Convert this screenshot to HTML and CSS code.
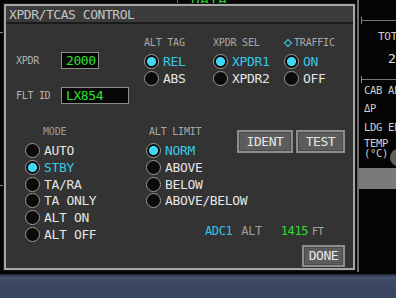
FILE: index.html
```html
<!DOCTYPE html>
<html lang="en">
<head>
    <meta charset="UTF-8">
    <title>XPDR/TCAS Control</title>
    <link rel="stylesheet" href="styles.css">
</head>
<body>
    <div class="screen">
        <div class="display">
            <!-- background display fragments -->
            <div class="top-rule"></div>
            <div class="top-title">DATA</div>
            <div class="edge-tick edge-tick--upper"></div>
            <div class="edge-tick edge-tick--lower"></div>

            <div class="side">
                <div class="side__rule side__rule--first"></div>
                <div class="side__tot">TOT</div>
                <div class="side__num">2</div>
                <div class="side__rule side__rule--second"></div>
                <div class="side__text side__text--cab">CAB ALT</div>
                <div class="side__text side__text--dp">ΔP</div>
                <div class="side__text side__text--ldg">LDG ELEV</div>
                <div class="side__text side__text--temp">TEMP<br>(°C)</div>
                <div class="side__bar"></div>
                <div class="side__knob"></div>
            </div>

            <!-- dialog -->
            <div class="dialog">
                <div class="dialog__title">XPDR/TCAS CONTROL</div>
                <div class="dialog__body">
                    <div class="top-row">
                        <div class="fields">
                            <div class="field">
                                <span class="field__label">XPDR</span>
                                <span class="field__box field__box--short">2000</span>
                            </div>
                            <div class="field">
                                <span class="field__label">FLT ID</span>
                                <span class="field__box field__box--long">LX854</span>
                            </div>
                        </div>
                        <div class="group group--tag">
                            <div class="group__title">ALT TAG</div>
                            <ul class="radios">
                                <li class="radio radio--on"><span class="radio__dot"></span>REL</li>
                                <li class="radio"><span class="radio__dot"></span>ABS</li>
                            </ul>
                        </div>
                        <div class="group group--sel">
                            <div class="group__title">XPDR SEL</div>
                            <ul class="radios">
                                <li class="radio radio--on"><span class="radio__dot"></span>XPDR1</li>
                                <li class="radio"><span class="radio__dot"></span>XPDR2</li>
                            </ul>
                        </div>
                        <div class="group group--traffic">
                            <div class="group__title"><span class="diamond"></span>TRAFFIC</div>
                            <ul class="radios">
                                <li class="radio radio--on"><span class="radio__dot"></span>ON</li>
                                <li class="radio"><span class="radio__dot"></span>OFF</li>
                            </ul>
                        </div>
                    </div>

                    <div class="mid">
                        <div class="group group--mode">
                            <div class="group__title">MODE</div>
                            <ul class="radios radios--tight">
                                <li class="radio"><span class="radio__dot"></span>AUTO</li>
                                <li class="radio radio--on"><span class="radio__dot"></span>STBY</li>
                                <li class="radio"><span class="radio__dot"></span>TA/RA</li>
                                <li class="radio"><span class="radio__dot"></span>TA ONLY</li>
                                <li class="radio"><span class="radio__dot"></span>ALT ON</li>
                                <li class="radio"><span class="radio__dot"></span>ALT OFF</li>
                            </ul>
                        </div>
                        <div class="group group--limit">
                            <div class="group__title">ALT LIMIT</div>
                            <ul class="radios radios--tight">
                                <li class="radio radio--on"><span class="radio__dot"></span>NORM</li>
                                <li class="radio"><span class="radio__dot"></span>ABOVE</li>
                                <li class="radio"><span class="radio__dot"></span>BELOW</li>
                                <li class="radio"><span class="radio__dot"></span>ABOVE/BELOW</li>
                            </ul>
                        </div>
                        <div class="actions">
                            <button class="btn btn--ident">IDENT</button>
                            <button class="btn btn--test">TEST</button>
                        </div>
                        <div class="adc">
                            <span class="adc__src">ADC1</span>
                            <span class="adc__label">ALT</span>
                            <span class="adc__value">1415</span>
                            <span class="adc__unit">FT</span>
                        </div>
                    </div>

                    <div class="footer">
                        <button class="btn btn--done">DONE</button>
                    </div>
                </div>
            </div>
        </div>
        <div class="bezel"></div>
    </div>
</body>
</html>
```

FILE: styles.css
```css
* {
    margin: 0;
    padding: 0;
    box-sizing: border-box;
}

body {
    background: #000;
    font-family: "DejaVu Sans Mono", "Liberation Mono", monospace;
}

.screen {
    width: 396px;
    height: 298px;
    display: flex;
    flex-direction: column;
    overflow: hidden;
    background: #040404;
}

.display {
    position: relative;
    flex: none;
    height: 274px;
}

.bezel {
    flex: 1;
    background: linear-gradient(to bottom, #1f2534 0, #46516d 3px, #3c4762 40%, #384360 100%);
}

/* background display bits */
.top-rule {
    position: absolute;
    left: 177px;
    top: 0;
    width: 1px;
    height: 6px;
    background: #707070;
}

.top-title {
    position: absolute;
    left: 191px;
    top: -7px;
    font-size: 15px;
    line-height: 15px;
    color: #26c826;
}

.edge-tick {
    position: absolute;
    left: 0;
    width: 3px;
    height: 1px;
    background: #8a8a8a;
}
.edge-tick--upper { top: 32px; }
.edge-tick--lower { top: 185px; }

.side {
    position: absolute;
    left: 357px;
    top: 0;
    width: 39px;
    height: 272px;
    border-left: 2px solid #6c6c6c;
    overflow: hidden;
    color: #cfcfcf;
    font-size: 10.5px;
    line-height: 11px;
    letter-spacing: -0.3px;
    white-space: nowrap;
}

.side__rule {
    position: relative;
    height: 1px;
    margin-left: 2px;
    background: #777;
}
.side__rule::before {
    content: '';
    position: absolute;
    left: 0;
    top: -3px;
    width: 1px;
    height: 7px;
    background: #888;
}
.side__rule--first { margin-top: 20px; }
.side__rule--second { margin-top: 14px; }

.side__tot {
    margin-top: 10px;
    padding-left: 19px;
    font-size: 11px;
}

.side__num {
    margin-top: 10px;
    padding-left: 29px;
    font-size: 13px;
    line-height: 13px;
    color: #e2e2e2;
}

.side__text { padding-left: 5px; }
.side__text--cab { margin-top: 5px; }
.side__text--dp { margin-top: 7px; }
.side__text--ldg { margin-top: 8px; }
.side__text--temp {
    width: fit-content;
    margin-top: 5px;
    line-height: 10px;
}

.side__bar {
    margin-top: 10px;
    height: 21px;
    background: #7a7a7a;
}

.side__knob {
    position: absolute;
    left: 31px;
    top: 149px;
    width: 16px;
    height: 17px;
    border-radius: 50%;
    background: #5e5e5e;
}

/* dialog */
.dialog {
    position: absolute;
    left: 4px;
    top: 4px;
    width: 351px;
    height: 266px;
    border: 2px solid #a5a5a5;
    background: #333;
    display: flex;
    flex-direction: column;
    box-shadow: 0 0 0 1px #181818;
}

.dialog__title {
    height: 18px;
    padding: 2px 0 0 3px;
    font-size: 13px;
    line-height: 14px;
    letter-spacing: -0.45px;
    color: #c4c4c4;
    background: #3b3b3b;
    border-bottom: 2px solid #1b1b1b;
}

.dialog__body {
    flex: 1;
    padding: 14px 8px 0 10px;
}

.top-row {
    display: flex;
    align-items: flex-start;
}

.fields {
    width: 128px;
    margin-top: 14px;
    display: flex;
    flex-direction: column;
    gap: 18px;
}

.field {
    display: flex;
    align-items: center;
}

.field__label {
    width: 45px;
    font-size: 10px;
    line-height: 10px;
    letter-spacing: -0.3px;
    color: #b5b5b5;
}

.field__box {
    height: 17px;
    padding-left: 4px;
    border: 1px solid #8e8e8e;
    background: #060606;
    color: #2fe02f;
    font-size: 13px;
    line-height: 15px;
    letter-spacing: -0.4px;
}
.field__box--short { width: 38px; }
.field__box--long { width: 68px; }

.group--tag { width: 69px; }
.group--sel { width: 71px; }

.group__title {
    height: 10px;
    font-size: 10px;
    line-height: 10px;
    letter-spacing: -0.2px;
    color: #a9a9a9;
    white-space: nowrap;
}

.diamond {
    display: inline-block;
    width: 6px;
    height: 6px;
    margin: 0 3px 0 1px;
    border: 1.5px solid #3bcfee;
    transform: rotate(45deg);
}

.radios {
    list-style: none;
    margin-top: 6px;
    display: flex;
    flex-direction: column;
    gap: 2px;
}
.radios--tight { gap: 1.8px; }

.radio {
    display: flex;
    align-items: center;
    gap: 4px;
    height: 15px;
    font-size: 13px;
    line-height: 15px;
    letter-spacing: -0.35px;
    color: #e4e4e4;
    white-space: nowrap;
}

.radio__dot {
    flex: none;
    width: 15px;
    height: 15px;
    border-radius: 50%;
    border: 1.5px solid #9a9a9a;
    background: #0a0a0a;
}

.radio--on { color: #36c8e8; }
.radio--on .radio__dot {
    background: radial-gradient(circle, #40d6f4 0 4.2px, #0a0a0a 4.8px);
}

.mid {
    margin-top: 23px;
    display: grid;
    grid-template-columns: 130px 91px auto;
}

.group--mode {
    grid-row: 1 / 3;
    padding-left: 9px;
}
.group--mode .group__title {
    padding-left: 18px;
    color: #9e9e9e;
}
.group--limit .group__title { padding-left: 3px; }

.actions {
    display: flex;
    gap: 3px;
    margin-top: 3px;
}

.btn {
    height: 23px;
    border: 2px solid #8d8d8d;
    background: #5c5c5c;
    color: #e6e6e6;
    font-family: inherit;
    font-size: 13px;
    line-height: 19px;
    letter-spacing: -0.45px;
    box-shadow: inset 0 0 0 1px #4a4a4a;
}
.btn--ident { width: 56px; }
.btn--test { width: 49px; }

.adc {
    grid-column: 2 / 4;
    margin-top: 13px;
    padding-left: 59px;
    display: flex;
    align-items: baseline;
    font-size: 12px;
    line-height: 12px;
    letter-spacing: -0.4px;
}
.adc__src { color: #30c4e6; }
.adc__label {
    margin-left: 9px;
    color: #9c9c9c;
}
.adc__value {
    margin-left: 19px;
    color: #2fdc2f;
}
.adc__unit {
    margin-left: 4px;
    font-size: 10px;
    color: #a8a8a8;
}

.footer {
    display: flex;
    justify-content: flex-end;
    margin-top: 3px;
}

.btn--done {
    width: 43px;
    height: 22px;
    line-height: 18px;
}
```
